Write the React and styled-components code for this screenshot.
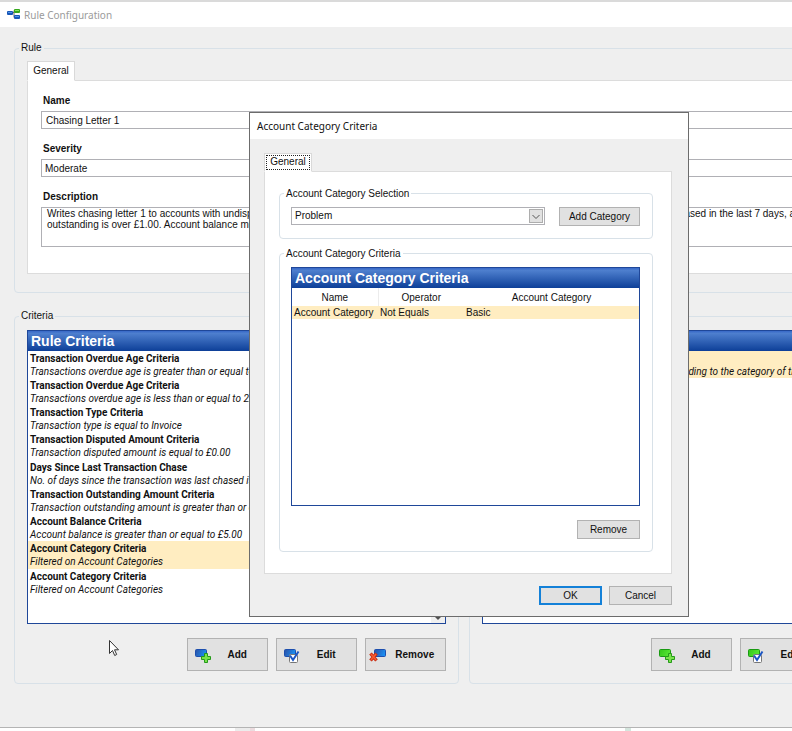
import React from "react";
import styled, { createGlobalStyle, css } from "styled-components";

const Global = createGlobalStyle`
  * { box-sizing: border-box; }
  html, body { margin: 0; padding: 0; }
  body { background: #fff; overflow: hidden; }
  body, button, input, select, textarea {
    font-family: "Liberation Sans", Arial, sans-serif;
    font-size: 10px;
    line-height: 12px;
    color: #111;
  }
`;

const Desktop = styled.div`
  position: relative;
  height: 100vh;
  min-height: 731px;
  overflow: hidden;
  display: flex;
  flex-direction: column;
`;

/* The window is wider than the visible desktop and runs off its right side. */
const Window = styled.div`
  position: relative;
  flex: 1;
  width: calc(100% + 146px);
  display: flex;
  flex-direction: column;
  background: #efefef;
  border-top: 2px solid #dadada;
  border-bottom: 1px solid #b4b4b4;
`;

const TitleBar = styled.header`
  display: flex;
  align-items: center;
  gap: 4px;
  height: 25px;
  padding: 0 7px;
  background: #fff;
  color: #9b9b9b;
  font: 10px/14px "Noto Sans", sans-serif;
`;

const Title = styled.h1`
  margin: 0;
  font: inherit;
`;

const Body = styled.main`
  display: flex;
  flex-direction: column;
  gap: 17px;
  padding: 15px 15px 0 14px;
`;

const Group = styled.fieldset`
  min-width: 0;
  margin: 0;
  padding: ${(p) => p.$pad || "7px 12px 18px"};
  border: 1px solid #d8e1e8;
  border-radius: 4px;
  flex: ${(p) => p.$flex || "none"};
`;

const Legend = styled.legend`
  height: 12px;
  margin-left: ${(p) => p.$inset || "-8px"};
  padding: 0 2px;
`;

const Tab = styled.button`
  display: block;
  position: relative;
  height: ${(p) => (p.$focused ? 19 : 20)}px;
  width: 48px;
  margin: 0 0 -1px;
  padding: 0;
  background: #fff;
  border: 1px solid #d9d9d9;
  border-bottom-color: #fff;
  ${(p) =>
    p.$focused &&
    css`
      outline: 1px dotted #222;
      outline-offset: -3px;
    `}
`;

const Panel = styled.section`
  background: #fff;
  border: 1px solid #dcdcdc;
  padding: ${(p) => p.$pad};
`;

const Field = styled.div`
  display: flex;
  flex-direction: column;
  gap: 4px;
  & + & { margin-top: 14px; }
`;

const Label = styled.label`
  padding-left: 2px;
  font-weight: bold;
`;

const boxed = css`
  width: 100%;
  background: #fff;
  border: 1px solid #b0b0b5;
  border-radius: 0;
  outline: none;
`;

const TextInput = styled.input`
  ${boxed}
  height: 18px;
  padding: 1px 4px 0;
`;

const Select = styled.select`
  ${boxed}
  appearance: none;
  height: 18px;
  padding: 1px 3px 0;
`;

const TextArea = styled.textarea`
  ${boxed}
  display: block;
  height: 40px;
  padding: 0 5px;
  line-height: 11px;
  resize: none;
  overflow: hidden;
  white-space: pre;
`;

const Columns = styled.div`
  display: flex;
  gap: 10px;
`;

const ListBox = styled.section`
  display: flex;
  flex-direction: column;
  height: ${(p) => p.$height}px;
  background: #fff;
  border: 1px solid #1f4799;
`;

const ListHeading = styled.h2`
  flex: none;
  height: 20px;
  margin: 0;
  padding: 0 3px;
  background: linear-gradient(#3768c8, #4e7fce 12%, #0d3f98);
  color: #fff;
  font-size: 14px;
  line-height: 20px;
`;

const ListBody = styled.div`
  flex: 1;
  display: flex;
`;

const Rules = styled.ul`
  flex: 1;
  min-width: 0;
  margin: 0;
  padding: 0;
  list-style: none;
  overflow: hidden;
  font-family: Roboto, "Liberation Sans", sans-serif;
`;

const Rule = styled.li`
  padding: 1px 2px 0;
  background: ${(p) => (p.$selected ? "#ffedc1" : "transparent")};
  line-height: 13px;
  white-space: nowrap;
  &:nth-child(4n) { padding-bottom: 1px; }
`;

const RuleName = styled.strong`
  display: block;
`;

const RuleText = styled.em`
  display: block;
`;

const Scrollbar = styled.div`
  display: flex;
  align-items: flex-end;
  justify-content: center;
  width: 14px;
  padding-bottom: 3px;
  background: #f0f0f0;
`;

const Actions = styled.div`
  display: flex;
  justify-content: flex-end;
  gap: 8px;
  margin-top: 14px;
`;

const ActionButton = styled.button`
  display: flex;
  align-items: center;
  width: 81px;
  height: 33px;
  padding: 0 11px 0 ${(p) => (p.$tight ? 3 : 6)}px;
  background: #e1e1e1;
  border: 1px solid #b2b2b2;
  font-weight: bold;
  svg { flex: none; margin-top: 3px; }
`;

const ActionText = styled.span`
  flex: 1;
  padding-left: ${(p) => (p.$tight ? 8 : 6)}px;
  text-align: center;
  white-space: nowrap;
`;

const Overlay = styled.div`
  position: absolute;
  inset: 0;
  padding-bottom: 1px;
  display: flex;
  align-items: center;
  justify-content: center;
`;

const Dialog = styled.div`
  width: 440px;
  background: #efefef;
  border: 1px solid #6c6c6c;
`;

const DialogTitle = styled.h2`
  height: 26px;
  margin: 0;
  padding: 0 7px;
  background: #fff;
  font: 10px/26px "Noto Sans", sans-serif;
`;

const DialogBody = styled.div`
  padding: 14px 16px 11px 14px;
`;

const SelectionRow = styled.div`
  display: flex;
  gap: 14px;
`;

const Combo = styled.div`
  position: relative;
  flex: 1;
  svg { position: absolute; right: 2px; top: 2px; pointer-events: none; }
`;

const Button = styled.button`
  width: ${(p) => p.$width || 63}px;
  height: 19px;
  padding: 2px 0 0;
  background: #e1e1e1;
  border: ${(p) => (p.$primary ? "2px solid #1481d8" : "1px solid #b2b2b2")};
`;

const Table = styled.table`
  width: 100%;
  table-layout: fixed;
  border-collapse: collapse;
  th {
    height: 18px;
    padding: 2px 0 0;
    font-weight: normal;
  }
  th + th { border-left: 1px solid #ececec; }
  th:last-child { border-left: 0; }
  td {
    height: 13px;
    padding: 1px 2px 0;
    background: #ffedc1;
    white-space: nowrap;
  }
`;

const NarrowCol = styled.col`
  width: 86px;
`;

const DialogActions = styled.div`
  display: flex;
  justify-content: flex-end;
  gap: 7px;
  margin-top: 12px;
`;

const Spacer = styled.div`
  height: 9px;
`;

const Strip = styled.footer`
  display: flex;
  justify-content: space-between;
  height: 3px;
  padding: 0 161px 0 235px;
`;

const Mark = styled.span`
  width: ${(p) => p.$width}px;
  background: ${(p) => p.$fill};
`;

const Pointer = styled.svg`
  position: absolute;
  left: 108px;
  top: 639px;
`;

function RuleIcon() {
  return (
    <svg width="13" height="11" viewBox="0 0 13 11" aria-hidden="true">
      <path d="M5 3.5h2V1.5h2M7 3v5.5h2" fill="none" stroke="#666" />
      <rect x="0" y="2" width="6" height="4" rx="1" fill="#1857b8" />
      <rect x="1" y="3" width="4" height="1" fill="#4f94e8" />
      <rect x="7" y="0" width="6" height="4" rx="1" fill="#35a81c" />
      <rect x="8" y="1" width="4" height="1" fill="#8be45e" />
      <rect x="7" y="6" width="6" height="4" rx="1" fill="#1857b8" />
      <rect x="8" y="7" width="4" height="1" fill="#4f94e8" />
    </svg>
  );
}

function ActionIcon({ kind, green }) {
  const left = kind === "remove" ? 5 : 1;
  const id = `${kind}-${green ? "g" : "b"}`;
  return (
    <svg width="18" height="16" viewBox="0 0 18 16" aria-hidden="true">
      <defs>
        <linearGradient id={id} x1="0" y1="0" x2="1" y2="0.3">
          <stop offset="0" stopColor={green ? "#35c51c" : "#2c50a4"} />
          <stop offset="1" stopColor={green ? "#55e632" : "#1b8df0"} />
        </linearGradient>
      </defs>
      <rect x={left + 0.5} y="1.5" width="11" height="7" rx="1" fill={`url(#${id})`} stroke={green ? "#199a12" : "#1d4fae"} />
      {kind === "add" && (
        <path d="M10.5 5.5h3v3h3v3h-3v3h-3v-3h-3v-3h3z" fill="#79e34a" stroke="#259a1a" />
      )}
      {kind === "edit" && (
        <g>
          <rect x="6.5" y="6.5" width="8" height="8" rx="1" fill="#fff" stroke="#777" />
          <path d="M7 7.5l3 4.5L15.5 3.5" fill="none" stroke="#1b55c4" strokeWidth="2" />
        </g>
      )}
      {kind === "remove" && (
        <g>
          <path d="M1.5 5.5l6 7M7.5 5.5l-6 7" stroke="#c42c12" strokeWidth="3.4" />
          <path d="M2 6l5 6M7 6l-5 6" stroke="#fa5a30" strokeWidth="1.6" />
        </g>
      )}
    </svg>
  );
}

const rules = [
  ["Transaction Overdue Age Criteria", "Transactions overdue age is greater than or equal to 15"],
  ["Transaction Overdue Age Criteria", "Transactions overdue age is less than or equal to 22"],
  ["Transaction Type Criteria", "Transaction type is equal to Invoice"],
  ["Transaction Disputed Amount Criteria", "Transaction disputed amount is equal to £0.00"],
  ["Days Since Last Transaction Chase", "No. of days since the transaction was last chased is greater than 7"],
  ["Transaction Outstanding Amount Criteria", "Transaction outstanding amount is greater than or equal to £1.00"],
  ["Account Balance Criteria", "Account balance is greater than or equal to £5.00"],
  ["Account Category Criteria", "Filtered on Account Categories", true],
  ["Account Category Criteria", "Filtered on Account Categories"],
];

const actions = [
  ["Write Letter", "Writes a letter to each matching account, according to the category of the account", true],
];

const description =
  "Writes chasing letter 1 to accounts with undisputed transactions between 15 and 22 days overdue at the time of the run, which have not been chased in the last 7 days, and the\n" +
  "outstanding is over £1.00. Account balance must be over £5.00.";

function RuleList({ heading, items, scroll }) {
  return (
    <ListBox $height={294}>
      <ListHeading>{heading}</ListHeading>
      <ListBody>
        <Rules>
          {items.map(([name, text, selected], i) => (
            <Rule key={i} $selected={selected}>
              <RuleName>{name}</RuleName>
              <RuleText>{text}</RuleText>
            </Rule>
          ))}
        </Rules>
        {scroll && (
          <Scrollbar>
            <svg width="8" height="6" viewBox="0 0 8 6" aria-hidden="true">
              <path d="M1 1.5l3 3 3-3" fill="none" stroke="#505050" strokeWidth="2" />
            </svg>
          </Scrollbar>
        )}
      </ListBody>
    </ListBox>
  );
}

function ActionRow({ green }) {
  return (
    <Actions>
      {["Add", "Edit", "Remove"].map((label) => (
        <ActionButton key={label} type="button" $tight={label === "Remove"}>
          <ActionIcon kind={label.toLowerCase()} green={green} />
          <ActionText $tight={label === "Remove"}>{label}</ActionText>
        </ActionButton>
      ))}
    </Actions>
  );
}

function CategoryDialog() {
  return (
    <Dialog role="dialog" aria-labelledby="dialog-title">
      <DialogTitle id="dialog-title">Account Category Criteria</DialogTitle>
      <DialogBody>
        <Tab type="button" $focused>General</Tab>
        <Panel $pad="16px 18px 21px 14px">
          <Group $pad="7px 12px 12px 11px">
            <Legend $inset="-7px">Account Category Selection</Legend>
            <SelectionRow>
              <Combo>
                <Select aria-label="Account category" defaultValue="Problem">
                  <option>Problem</option>
                  <option>Basic</option>
                </Select>
                <svg width="14" height="14" viewBox="0 0 14 14" aria-hidden="true">
                  <rect x="0.5" y="0.5" width="13" height="13" fill="#e1e1e1" stroke="#adadad" />
                  <path d="M3.5 6l3.5 3.5L10.5 6" fill="none" stroke="#555" />
                </svg>
              </Combo>
              <Button type="button" $width={81}>Add Category</Button>
            </SelectionRow>
          </Group>
          <Spacer />
          <Group $pad="7px 12px 12px 11px">
            <Legend $inset="-7px">Account Category Criteria</Legend>
            <ListBox $height={239}>
              <ListHeading>Account Category Criteria</ListHeading>
              <Table>
                <colgroup>
                  <NarrowCol />
                  <NarrowCol />
                  <col />
                </colgroup>
                <thead>
                  <tr>
                    <th scope="col">Name</th>
                    <th scope="col">Operator</th>
                    <th scope="col">Account Category</th>
                  </tr>
                </thead>
                <tbody>
                  <tr>
                    <td>Account Category</td>
                    <td>Not Equals</td>
                    <td>Basic</td>
                  </tr>
                </tbody>
              </Table>
            </ListBox>
            <Actions>
              <Button type="button">Remove</Button>
            </Actions>
          </Group>
        </Panel>
        <DialogActions>
          <Button type="button" $primary>OK</Button>
          <Button type="button">Cancel</Button>
        </DialogActions>
      </DialogBody>
    </Dialog>
  );
}

export default function App() {
  return (
    <Desktop>
      <Global />
      <Window>
        <TitleBar>
          <RuleIcon />
          <Title>Rule Configuration</Title>
        </TitleBar>
        <Body>
          <Group>
            <Legend>Rule</Legend>
            <Tab type="button">General</Tab>
            <Panel $pad="14px 13px 26px">
              <Field>
                <Label htmlFor="name">Name</Label>
                <TextInput id="name" defaultValue="Chasing Letter 1" />
              </Field>
              <Field>
                <Label htmlFor="severity">Severity</Label>
                <Select id="severity" defaultValue="Moderate">
                  <option>Moderate</option>
                </Select>
              </Field>
              <Field>
                <Label htmlFor="description">Description</Label>
                <TextArea id="description" defaultValue={description} />
              </Field>
            </Panel>
          </Group>
          <Columns>
            <Group $flex="445 1 0" $pad="8px 12px 12px">
              <Legend>Criteria</Legend>
              <RuleList heading="Rule Criteria" items={rules} scroll />
              <ActionRow />
            </Group>
            <Group $flex="454 1 0" $pad="8px 12px 12px">
              <Legend>Actions</Legend>
              <RuleList heading="Rule Actions" items={actions} />
              <ActionRow green />
            </Group>
          </Columns>
        </Body>
        <Overlay>
          <CategoryDialog />
        </Overlay>
      </Window>
      <Strip>
        <Mark $width={20} $fill="linear-gradient(90deg, #ececec 75%, #ecdcdf 75%)" />
        <Mark $width={6} $fill="#d5e6de" />
      </Strip>
      <Pointer width="12" height="18" viewBox="0 0 12 18" aria-hidden="true">
        <path d="M1.5 1.5v13l3-3 2.2 5 2-1-2.2-4.7h4z" fill="#fff" stroke="#333" />
      </Pointer>
    </Desktop>
  );
}
